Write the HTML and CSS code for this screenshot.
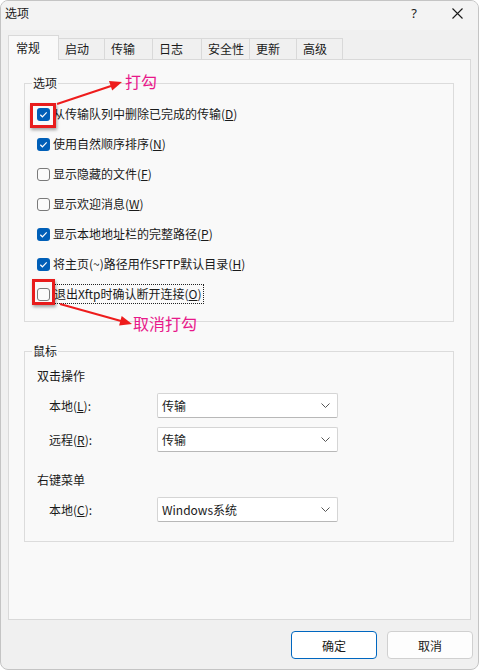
FILE: index.html
```html
<!DOCTYPE html>
<html lang="zh-CN">
<head>
    <meta charset="UTF-8">
    <title>选项</title>
    <link rel="stylesheet" href="styles.css">
</head>
<body>

    <div class="window">
        <div class="titlebar">
            <span class="title">选项</span>
            <span class="help">?</span>
            <span class="close">
                <svg width="11" height="11" viewBox="0 0 11 11"><path d="M0.5 0.5 L10.5 10.5 M10.5 0.5 L0.5 10.5" stroke="#1a1a1a" stroke-width="1.1" fill="none"/></svg>
            </span>
        </div>

        <div class="tabs">
            <div class="tab active">常规</div>
            <div class="tab">启动</div>
            <div class="tab">传输</div>
            <div class="tab">日志</div>
            <div class="tab">安全性</div>
            <div class="tab">更新</div>
            <div class="tab">高级</div>
        </div>

        <div class="panel">
            <fieldset class="group options">
                <legend>选项</legend>
                <label class="check-row"><span class="box checked"><svg width="13" height="13" viewBox="0 0 13 13"><path d="M3.3 6.8 L5.4 8.8 L9.7 4.4" stroke="#fff" stroke-width="1.2" fill="none"/></svg></span><span class="text">从传输队列中删除已完成的传输(<u>D</u>)</span></label>
                <label class="check-row"><span class="box checked"><svg width="13" height="13" viewBox="0 0 13 13"><path d="M3.3 6.8 L5.4 8.8 L9.7 4.4" stroke="#fff" stroke-width="1.2" fill="none"/></svg></span><span class="text">使用自然顺序排序(<u>N</u>)</span></label>
                <label class="check-row"><span class="box"></span><span class="text">显示隐藏的文件(<u>F</u>)</span></label>
                <label class="check-row"><span class="box"></span><span class="text">显示欢迎消息(<u>W</u>)</span></label>
                <label class="check-row"><span class="box checked"><svg width="13" height="13" viewBox="0 0 13 13"><path d="M3.3 6.8 L5.4 8.8 L9.7 4.4" stroke="#fff" stroke-width="1.2" fill="none"/></svg></span><span class="text">显示本地地址栏的完整路径(<u>P</u>)</span></label>
                <label class="check-row"><span class="box checked"><svg width="13" height="13" viewBox="0 0 13 13"><path d="M3.3 6.8 L5.4 8.8 L9.7 4.4" stroke="#fff" stroke-width="1.2" fill="none"/></svg></span><span class="text">将主页(~)路径用作SFTP默认目录(<u>H</u>)</span></label>
                <label class="check-row"><span class="box"></span><span class="text focused">退出Xftp时确认断开连接(<u>O</u>)</span></label>
            </fieldset>

            <fieldset class="group mouse">
                <legend>鼠标</legend>
                <div class="sub-title">双击操作</div>
                <div class="field-row first">
                    <span class="field-label">本地(<u>L</u>):</span>
                    <div class="combo"><span>传输</span><svg width="9" height="5" viewBox="0 0 9 5"><path d="M0.5 0.5 L4.5 4.5 L8.5 0.5" stroke="#555" fill="none"/></svg></div>
                </div>
                <div class="field-row">
                    <span class="field-label">远程(<u>R</u>):</span>
                    <div class="combo"><span>传输</span><svg width="9" height="5" viewBox="0 0 9 5"><path d="M0.5 0.5 L4.5 4.5 L8.5 0.5" stroke="#555" fill="none"/></svg></div>
                </div>
                <div class="sub-title second">右键菜单</div>
                <div class="field-row first">
                    <span class="field-label">本地(<u>C</u>):</span>
                    <div class="combo"><span>Windows系统</span><svg width="9" height="5" viewBox="0 0 9 5"><path d="M0.5 0.5 L4.5 4.5 L8.5 0.5" stroke="#555" fill="none"/></svg></div>
                </div>
            </fieldset>
        </div>

        <div class="buttons">
            <button class="btn primary">确定</button>
            <button class="btn">取消</button>
        </div>

        <!-- 标注 -->
        <div class="mark mark-1"></div>
        <div class="mark mark-2"></div>
        <svg class="arrows" width="479" height="670" viewBox="0 0 479 670">
            <line x1="57" y1="104" x2="111" y2="86" stroke="#ee1c1c" stroke-width="2"/>
            <polygon points="122,82 112.2,90.6 109,81.1" fill="#ee1c1c"/>
            <line x1="60" y1="304" x2="121" y2="321" stroke="#ee1c1c" stroke-width="2"/>
            <polygon points="132,324 119.1,325.6 121.7,316" fill="#ee1c1c"/>
        </svg>
        <span class="note note-1">打勾</span>
        <span class="note note-2">取消打勾</span>
    </div>

</body>
</html>
```

FILE: styles.css
```css
body {
    margin: 0;
    background-color: #fff;
    font-family: "Noto Sans CJK SC", "Noto Sans", sans-serif;
    font-size: 12px;
    color: #1a1a1a;
}
.window {
    position: relative;
    width: 479px;
    height: 670px;
    box-sizing: border-box;
    border: 1px solid #c4c4c4;
    border-radius: 8px;
    background-color: #f0f0f0;
    display: flex;
    flex-direction: column;
    overflow: hidden;
}
.titlebar {
    height: 29px;
    padding: 0 0 5px 4px;
    box-sizing: border-box;
    display: flex;
    align-items: center;
    background-color: #f3f3f3;
}
.title {
    line-height: 16px;
}
.help {
    margin-left: auto;
    font-family: "Noto Sans", sans-serif;
    font-size: 13px;
    line-height: 16px;
}
.close {
    display: flex;
    margin: 1px 15px 0 35px;
}
.tabs {
    display: flex;
    align-items: flex-end;
    height: 24px;
    margin: 5px 0 0 7px;
}
.tab {
    box-sizing: border-box;
    height: 21px;
    padding-left: 6px;
    border: 1px solid #d9d9d9;
    border-bottom: none;
    line-height: 20px;
    background-color: #f0f0f0;
}
.tab + .tab {
    border-left: none;
}
.tab.active {
    height: 25px;
    margin-bottom: -1px;
    padding-left: 7px;
    line-height: 23px;
    background-color: #f9f9f9;
    position: relative;
    z-index: 1;
}
.tab:nth-child(1) { width: 51px; }
.tab:nth-child(2) { width: 46px; }
.tab:nth-child(3) { width: 48px; }
.tab:nth-child(4) { width: 49px; }
.tab:nth-child(5) { width: 48px; }
.tab:nth-child(6) { width: 47px; }
.tab:nth-child(7) { width: 46px; }
.panel {
    box-sizing: border-box;
    width: 463px;
    height: 561px;
    margin-left: 7px;
    border: 1px solid #d9d9d9;
    background-color: #f9f9f9;
    display: flex;
    flex-direction: column;
}
.group {
    box-sizing: border-box;
    width: 430px;
    margin: 15px 0 0 15px;
    padding: 8px 0 12px 12px;
    border: 1px solid #dcdcdc;
    min-width: 0;
}
.group legend {
    margin-left: -5px;
    padding: 0 1px;
    line-height: 16px;
}
.options {
    padding-top: 8px;
}
.check-row {
    display: flex;
    align-items: center;
    height: 30px;
}
.box {
    box-sizing: border-box;
    width: 13px;
    height: 13px;
    margin-right: 3px;
    border: 1px solid #7a7a7a;
    border-radius: 3px;
    background-color: #fbfbfb;
    display: flex;
}
.box.checked {
    border: none;
    background-color: #005fb8;
}
.text {
    line-height: 16px;
}
.text.focused {
    margin-left: -1px;
    padding: 1px 1px;
    border: 1px dotted #222;
}
.mouse {
    margin-top: 21px;
    padding: 7px 0 19px 12px;
}
.sub-title {
    height: 20px;
    line-height: 20px;
}
.sub-title.second {
    margin-top: 18px;
}
.field-row {
    display: flex;
    align-items: center;
    margin-top: 9px;
    padding-left: 12px;
}
.field-row.first {
    margin-top: 7px;
}
.field-label {
    width: 108px;
}
.combo {
    box-sizing: border-box;
    width: 181px;
    height: 25px;
    padding: 0 7px 0 4px;
    border: 1px solid #d5d5d5;
    border-bottom-color: #b8b8b8;
    border-radius: 2px;
    background-color: #fff;
    display: flex;
    align-items: center;
    justify-content: space-between;
}
.buttons {
    display: flex;
    justify-content: flex-end;
    gap: 10px;
    margin: 11px 5px 0 0;
}
.btn {
    box-sizing: border-box;
    width: 86px;
    height: 28px;
    border: 1px solid #d0d0d0;
    border-radius: 4px;
    background-color: #fdfdfd;
    font-family: "Noto Sans CJK SC", sans-serif;
    font-size: 12px;
    color: #1a1a1a;
}
.btn.primary {
    border-color: #0067c0;
    background-color: #fff;
}
.mark {
    position: absolute;
    box-sizing: border-box;
    border: 3px solid #e81c1c;
    box-shadow: 1px 2px 3px rgba(0, 0, 0, 0.35);
}
.mark-1 {
    left: 29px;
    top: 102px;
    width: 26px;
    height: 25px;
}
.mark-2 {
    left: 31px;
    top: 278px;
    width: 23px;
    height: 26px;
}
.arrows {
    position: absolute;
    left: -1px;
    top: -1px;
    pointer-events: none;
}
.note {
    position: absolute;
    font-size: 16px;
    line-height: 20px;
    color: #e8188a;
}
.note-1 {
    left: 124px;
    top: 70px;
}
.note-2 {
    left: 132px;
    top: 312px;
}
```
